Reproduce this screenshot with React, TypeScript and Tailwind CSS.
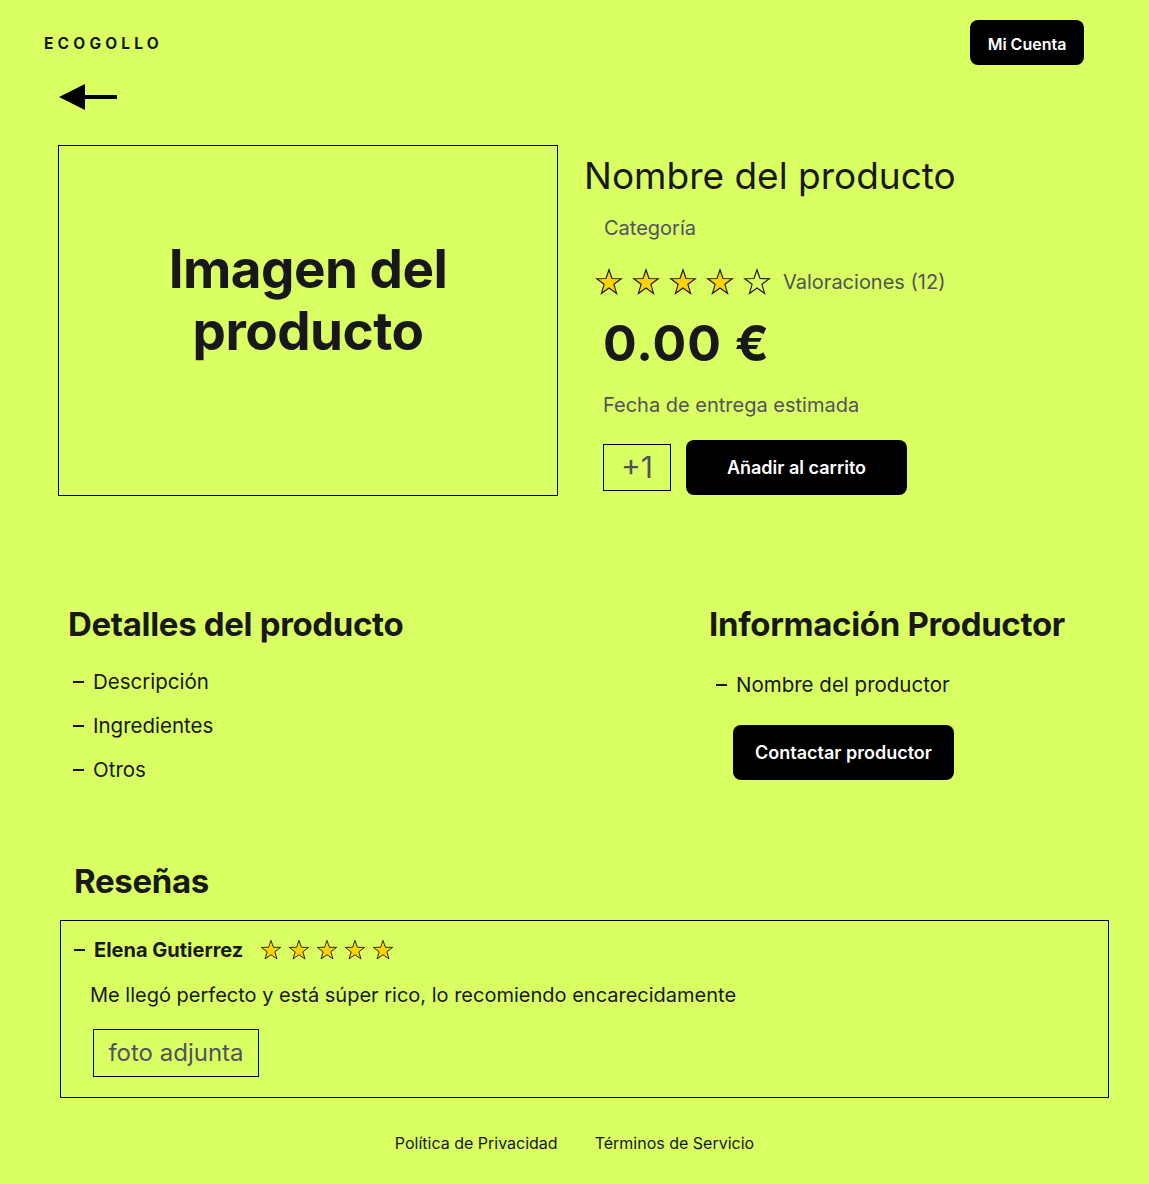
import React from "react";

const Star = ({ filled, size }: { filled: boolean; size: number }) => (
  <svg width={size} height={size} viewBox="0 0 24 24" className="block">
    <polygon
      points="12,1.5 14.6,9 22.5,9.2 16.2,14 18.5,21.8 12,17.2 5.5,21.8 7.8,14 1.5,9.2 9.4,9"
      fill={filled ? "#ffd400" : "none"}
      stroke="#1a1a1a"
      strokeWidth="1"
      strokeLinejoin="miter"
    />
  </svg>
);

const Dash = ({ className = "" }: { className?: string }) => (
  <span className={"inline-block w-[11px] h-[1.5px] bg-[#18181b] " + className} />
);

export default function App() {
  return (
    <div
      className="min-h-[1184px] w-full bg-[#d9ff63] text-[#18181b]"
      style={{ fontFamily: "Inter, 'Noto Sans', sans-serif" }}
    >
      {/* Header */}
      <header className="flex items-center justify-between pl-[44px] pr-[65px] pt-[20px]">
        <div className="pt-[3px] text-[15.5px] font-bold tracking-[0.27em]">ECOGOLLO</div>
        <button className="h-[45px] w-[114px] rounded-lg bg-black pt-[2px] text-[16px] font-semibold text-white">
          Mi Cuenta
        </button>
      </header>

      {/* Back arrow */}
      <div className="pl-[59px] pt-[18px]">
        <svg width="58" height="28" viewBox="0 0 58 28" className="block">
          <polygon points="0,14 26,1 26,27" fill="#000" />
          <rect x="24" y="12" width="34" height="4" fill="#000" />
        </svg>
      </div>

      {/* Product top */}
      <section className="flex pl-[58px] pt-[34px]">
        <div className="flex h-[351px] w-[500px] justify-center border border-black pt-[92px]">
          <div className="text-center text-[53px] font-bold leading-[62px] tracking-[-0.01em]">
            Imagen del
            <br />
            producto
          </div>
        </div>
        <div className="ml-[26px] flex flex-col">
          <h1 className="mt-[9px] text-[37px] font-normal leading-[44px]">
            Nombre del producto
          </h1>
          <div className="ml-[20px] mt-[18px] text-[20px] leading-[24px] text-[#52525b]">Categoría</div>
          <div className="ml-[11px] mt-[27px] flex items-center">
            <div className="flex gap-[9px]">
              <Star filled size={28} />
              <Star filled size={28} />
              <Star filled size={28} />
              <Star filled size={28} />
              <Star filled={false} size={28} />
            </div>
            <span className="ml-[12px] text-[20px] text-[#52525b]">Valoraciones (12)</span>
          </div>
          <div className="ml-[19px] mt-[16px] text-[50px] font-bold leading-[60px] tracking-[0.02em]">
            0.00 €
          </div>
          <div className="ml-[19px] mt-[20px] text-[20px] leading-[24px] text-[#52525b]">
            Fecha de entrega estimada
          </div>
          <div className="ml-[19px] mt-[23px] flex items-center">
            <div className="flex h-[47px] w-[68px] items-center justify-center border border-black text-[30px] text-[#52525b]">
              +1
            </div>
            <button className="ml-[15px] h-[55px] w-[221px] rounded-lg bg-black text-[18px] font-semibold text-white">
              Añadir al carrito
            </button>
          </div>
        </div>
      </section>

      {/* Details */}
      <section className="mt-[103px] flex">
        <div className="w-[709px] pl-[68px] pt-[5px]">
          <h2 className="text-[33px] font-bold leading-[40px] tracking-[-0.01em]">
            Detalles del producto
          </h2>
          <ul className="mt-[26px] flex flex-col gap-[20px] pl-[5px]">
            {["Descripción", "Ingredientes", "Otros"].map((t) => (
              <li key={t} className="flex items-center text-[20.5px] leading-[24px]">
                <Dash />
                <span className="ml-[9px]">{t}</span>
              </li>
            ))}
          </ul>
        </div>
        <div className="flex flex-col pt-[5px]">
          <h2 className="text-[33px] font-bold leading-[40px] tracking-[-0.01em]">
            Información Productor
          </h2>
          <div className="ml-[7px] mt-[29px] flex items-center text-[20.5px] leading-[24px]">
            <Dash />
            <span className="ml-[9px]">Nombre del productor</span>
          </div>
          <button className="ml-[24px] mt-[28px] h-[55px] w-[221px] rounded-lg bg-black text-[18px] font-semibold text-white">
            Contactar productor
          </button>
        </div>
      </section>

      {/* Reviews */}
      <section className="mt-[79px] pl-[60px] pr-[40px]">
        <h2 className="pl-[14px] text-[33px] font-bold leading-[40px] tracking-[-0.01em]">Reseñas</h2>
        <div className="mt-[19px] h-[178px] border border-black pl-[13px] pt-[16px]">
          <div className="flex items-center">
            <Dash />
            <span className="ml-[9px] text-[20px] font-bold leading-[26px]">Elena Gutierrez</span>
            <div className="ml-[17px] flex gap-[6px]">
              {[0, 1, 2, 3, 4].map((i) => (
                <Star key={i} filled size={22} />
              ))}
            </div>
          </div>
          <p className="ml-[16px] mt-[20px] text-[20px] leading-[24px]">
            Me llegó perfecto y está súper rico, lo recomiendo encarecidamente
          </p>
          <div className="ml-[19px] mt-[22px] flex h-[48px] w-[166px] items-center justify-center border border-black text-[24px] text-[#52525b]">
            foto adjunta
          </div>
        </div>
      </section>

      {/* Footer */}
      <footer className="mt-[33px] flex justify-center gap-[37px] pb-[30px] text-[16px]">
        <span>Política de Privacidad</span>
        <span>Términos de Servicio</span>
      </footer>
    </div>
  );
}
